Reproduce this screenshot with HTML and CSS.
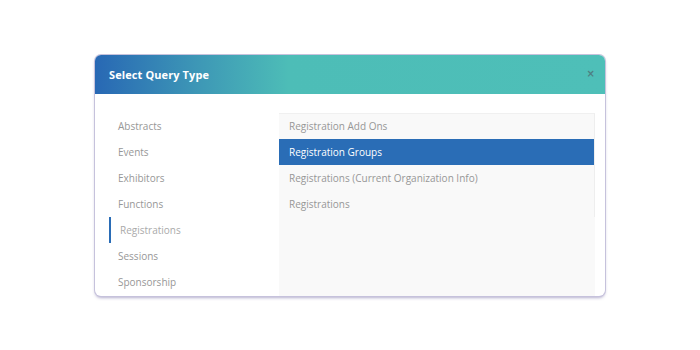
FILE: index.html
```html
<!DOCTYPE html>
<html lang="en">
<head>
  <meta charset="UTF-8">
  <title>Select Query Type</title>
  <link rel="stylesheet" href="styles.css">
</head>
<body>
  <div class="modal">
    <div class="modal-header">
      <h3>Select Query Type</h3>
      <span class="close">&times;</span>
    </div>
    <div class="modal-body">
      <ul class="categories">
        <li>Abstracts</li>
        <li>Events</li>
        <li>Exhibitors</li>
        <li>Functions</li>
        <li class="active">Registrations</li>
        <li>Sessions</li>
        <li>Sponsorship</li>
      </ul>
      <div class="types">
        <ul>
          <li>Registration Add Ons</li>
          <li class="selected">Registration Groups</li>
          <li>Registrations (Current Organization Info)</li>
          <li>Registrations</li>
        </ul>
      </div>
    </div>
  </div>
</body>
</html>
```

FILE: styles.css
```css
* {
  margin: 0;
  padding: 0;
  box-sizing: border-box;
}

body {
  background: #fff;
  height: 350px;
  display: flex;
  justify-content: center;
  align-items: center;
  font-family: 'Open Sans', sans-serif;
}

.modal {
  width: 510px;
  height: 241px;
  background: #fff;
  border-radius: 6px;
  overflow: hidden;
  display: flex;
  flex-direction: column;
  box-shadow: 0 0 0 1px #c6c2dc, 0 2px 3px rgba(110, 100, 160, 0.5);
}

.modal-header {
  height: 39px;
  flex-shrink: 0;
  display: flex;
  align-items: center;
  justify-content: space-between;
  padding: 0 10px 0 14px;
  background: linear-gradient(90deg, #2868b4 0%, #3d97b6 20%, #4dbdb7 38%, #4ebfb8 100%);
}

.modal-header h3 {
  color: #fff;
  font-size: 11px;
  font-weight: 700;
  letter-spacing: 0.1px;
}

.close {
  color: #4f7f82;
  font-family: 'DejaVu Sans', sans-serif;
  font-size: 10px;
  font-weight: 700;
  line-height: 1;
}

.modal-body {
  flex: 1;
  display: flex;
  padding: 19px 10px 0 14px;
  overflow: hidden;
}

.categories {
  list-style: none;
  width: 170px;
  flex-shrink: 0;
}

.categories li {
  height: 26px;
  line-height: 26px;
  padding-left: 9px;
  font-size: 10px;
  color: #979797;
}

.categories li.active {
  border-left: 2px solid #2a6cb6;
  padding-left: 9px;
  color: #aaa;
}

.types {
  flex: 1;
  background: #f9f9f9;
}

.types ul {
  list-style: none;
  border-top: 1px solid #f0f0f0;
  border-right: 1px solid #eee;
}

.types li {
  height: 26px;
  line-height: 26px;
  padding-left: 10px;
  font-size: 10px;
  color: #979797;
}

.types li:first-child {
  height: 25px;
  line-height: 25px;
}

.types li.selected {
  background: #2a6db6;
  color: #fff;
}
```
